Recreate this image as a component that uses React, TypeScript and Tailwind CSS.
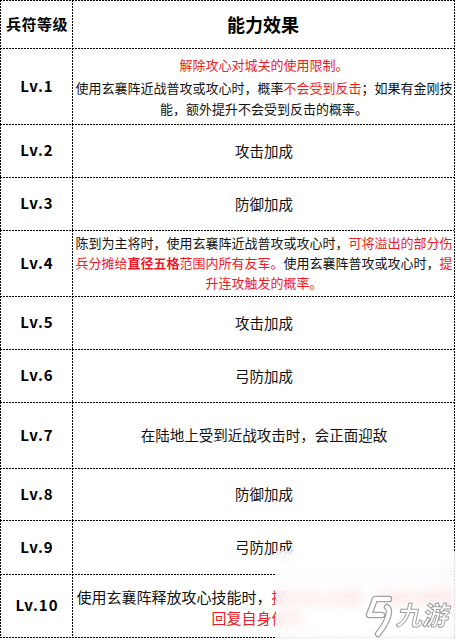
import React from "react";

// dashed edges (2px on, 1px off) drawn on the top and left of each cell
const cellEdge =
  "[background-image:linear-gradient(90deg,#000_2px,transparent_2px),linear-gradient(180deg,#000_2px,transparent_2px)] [background-size:3px_1px,1px_3px] [background-repeat:repeat-x,repeat-y] [background-position:0_0,0_0]";

// right and bottom edges of the whole table
const tableEdge =
  "[background-image:linear-gradient(180deg,#000_2px,transparent_2px),linear-gradient(90deg,#000_2px,transparent_2px)] [background-size:1px_3px,3px_1px] [background-repeat:repeat-y,repeat-x] [background-position:right_top,left_bottom]";

const Red = ({ children }: { children: React.ReactNode }) => (
  <span className="text-[#ee1b24]">{children}</span>
);

type Row = {
  level: string;
  height: string;
  body: React.ReactNode;
};

const Single = ({ children }: { children: React.ReactNode }) => (
  <span className="text-[14.5px]">{children}</span>
);

const rows: Row[] = [
  {
    level: "Lv.1",
    height: "h-[76px]",
    body: (
      <div className="leading-[21px]">
        <div className="mb-[2px]">
          <Red>解除攻心对城关的使用限制。</Red>
        </div>
        <div>
          使用玄襄阵近战普攻或攻心时，概率<Red>不会受到反击</Red>
          ；如果有金刚技能，额外提升不会受到反击的概率。
        </div>
      </div>
    ),
  },
  { level: "Lv.2", height: "h-[53px]", body: <Single>攻击加成</Single> },
  { level: "Lv.3", height: "h-[53px]", body: <Single>防御加成</Single> },
  {
    level: "Lv.4",
    height: "h-[66px]",
    body: (
      <div className="leading-[20px]">
        陈到为主将时，使用玄襄阵近战普攻或攻心时，
        <Red>
          可将溢出的部分伤兵分摊给<b className="font-bold">直径五格</b>
          范围内所有友军。
        </Red>
        使用玄襄阵普攻或攻心时，<Red>提升连攻触发的概率。</Red>
      </div>
    ),
  },
  { level: "Lv.5", height: "h-[53px]", body: <Single>攻击加成</Single> },
  { level: "Lv.6", height: "h-[53px]", body: <Single>弓防加成</Single> },
  {
    level: "Lv.7",
    height: "h-[66px]",
    body: <Single>在陆地上受到近战攻击时，会正面迎敌</Single>,
  },
  { level: "Lv.8", height: "h-[52px]", body: <Single>防御加成</Single> },
  { level: "Lv.9", height: "h-[54px]", body: <Single>弓防加成</Single> },
  {
    level: "Lv.10",
    height: "h-[63px]",
    body: (
      <div className="text-[15px] leading-[21px] mt-[2px]">
        使用玄襄阵释放攻心技能时，
        <Red>提升攻心伤害，并按伤害量回复自身伤兵。</Red>
      </div>
    ),
  },
];

const Watermark = () => (
  <div className="absolute left-[276px] top-[551px] w-[180px] h-[90px] bg-white/75 backdrop-blur-[6px]">
    <div className="absolute left-[89px] top-[43px] flex items-center gap-[5px]">
      <svg width="28" height="44" viewBox="0 0 28 44" fill="none">
        <g strokeLinecap="round" strokeLinejoin="round">
          <path
            d="M24 5 H10 L4 21 H17 M22 13 C26 16 24 26 13 40"
            stroke="#a3a3a3"
            strokeWidth="6.5"
          />
          <path
            d="M24 5 H10 L4 21 H17 M22 13 C26 16 24 26 13 40"
            stroke="#ffffff"
            strokeWidth="4"
          />
        </g>
      </svg>
      <span className="-skew-x-12 text-[26px] font-bold leading-none text-white [-webkit-text-stroke:1px_#9f9f9f] mb-[4px]">
        九游
      </span>
    </div>
  </div>
);

export default function App() {
  return (
    <div className="relative w-[456px] h-[641px] bg-white overflow-hidden [font-family:'Noto_Sans_CJK_SC','Noto_Sans',sans-serif] text-[13px] text-[#111]">
      <div className={`w-[455px] pr-px pb-px ${tableEdge}`}>
        <div className="grid grid-cols-[72px_382px] h-[48px]">
          <div
            className={`${cellEdge} flex items-center justify-center pl-[2px] text-[15px] font-bold text-black tracking-[0.5px]`}
          >
            兵符等级
          </div>
          <div
            className={`${cellEdge} flex items-center justify-center text-[18px] font-bold text-black`}
          >
            能力效果
          </div>
        </div>
        {rows.map((row) => (
          <div
            key={row.level}
            className={`grid grid-cols-[72px_382px] ${row.height}`}
          >
            <div
              className={`${cellEdge} flex items-center justify-center pl-[2px] text-[15px] font-bold text-black tracking-[1px]`}
            >
              {row.level}
            </div>
            <div
              className={`${cellEdge} flex items-center justify-center text-center pl-[2px]`}
            >
              {row.body}
            </div>
          </div>
        ))}
      </div>
      <Watermark />
    </div>
  );
}
